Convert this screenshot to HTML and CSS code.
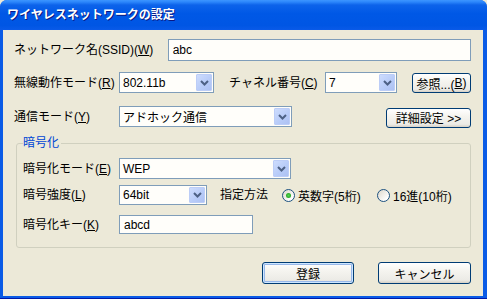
FILE: index.html
```html
<!DOCTYPE html>
<html lang="ja">
<head>
  <meta charset="UTF-8">
  <title>ワイヤレスネットワークの設定</title>
  <link rel="stylesheet" href="styles.css">
</head>
<body>

<div class="window">
  <div class="titlebar">ワイヤレスネットワークの設定</div>

  <div class="client">
    <div class="row row-ssid">
      <label class="lbl lbl-wide">ネットワーク名(SSID)(<u>W</u>)</label>
      <div class="textbox tb-ssid">abc</div>
    </div>

    <div class="row row-mode">
      <label class="lbl lbl-main">無線動作モード(<u>R</u>)</label>
      <div class="combo cb-mode"><span>802.11b</span><i class="drop"><svg viewBox="0 0 9 6" width="9" height="6"><path d="M1 1 L4.5 4.5 L8 1" fill="none" stroke="#4d6185" stroke-width="2"/></svg></i></div>
      <label class="lbl lbl-channel">チャネル番号(<u>C</u>)</label>
      <div class="combo cb-channel"><span>7</span><i class="drop"><svg viewBox="0 0 9 6" width="9" height="6"><path d="M1 1 L4.5 4.5 L8 1" fill="none" stroke="#4d6185" stroke-width="2"/></svg></i></div>
      <button class="btn btn-browse">参照...(<u>B</u>)</button>
    </div>

    <div class="row row-comm">
      <label class="lbl lbl-main">通信モード(<u>Y</u>)</label>
      <div class="combo cb-comm"><span>アドホック通信</span><i class="drop"><svg viewBox="0 0 9 6" width="9" height="6"><path d="M1 1 L4.5 4.5 L8 1" fill="none" stroke="#4d6185" stroke-width="2"/></svg></i></div>
      <button class="btn btn-detail">詳細設定 &gt;&gt;</button>
    </div>

    <fieldset class="group">
      <legend>暗号化</legend>

      <div class="row row-enc">
        <label class="lbl lbl-group">暗号化モード(<u>E</u>)</label>
        <div class="combo cb-enc"><span>WEP</span><i class="drop"><svg viewBox="0 0 9 6" width="9" height="6"><path d="M1 1 L4.5 4.5 L8 1" fill="none" stroke="#4d6185" stroke-width="2"/></svg></i></div>
      </div>

      <div class="row row-strength">
        <label class="lbl lbl-group">暗号強度(<u>L</u>)</label>
        <div class="combo cb-strength"><span>64bit</span><i class="drop"><svg viewBox="0 0 9 6" width="9" height="6"><path d="M1 1 L4.5 4.5 L8 1" fill="none" stroke="#4d6185" stroke-width="2"/></svg></i></div>
        <span class="lbl lbl-method">指定方法</span>
        <span class="radio radio-alpha"><i class="dot checked"></i>英数字(5桁)</span>
        <span class="radio"><i class="dot"></i>16進(10桁)</span>
      </div>

      <div class="row row-key">
        <label class="lbl lbl-group">暗号化キー(<u>K</u>)</label>
        <div class="textbox tb-key">abcd</div>
      </div>
    </fieldset>

    <div class="row row-actions">
      <button class="btn btn-ok">登録</button>
      <button class="btn btn-cancel">キャンセル</button>
    </div>
  </div>
</div>

</body>
</html>
```

FILE: styles.css
```css
* {
  margin: 0;
  padding: 0;
  box-sizing: border-box;
}

body {
  font-family: 'Liberation Sans', 'Noto Sans CJK JP', sans-serif;
  font-size: 12px;
  color: #000;
  background: #ece9d8;
}

.window {
  width: 487px;
  height: 299px;
  display: flex;
  flex-direction: column;
  background: #0a5be6;
  border-radius: 7px 7px 0 0;
  border-bottom: 1px solid #0019a8;
  overflow: hidden;
}

.titlebar {
  height: 30px;
  flex: none;
  padding: 7px 0 0 7px;
  color: #fff;
  font-weight: bold;
  font-size: 12px;
  line-height: 16px;
  text-shadow: 1px 1px #0a1883;
  background: linear-gradient(to bottom, #3d95ff 0, #2c86fb 2px, #0d63ea 5px, #0058e6 45%, #0056e4 85%, #0a5ae8 100%);
}

.client {
  flex: 1;
  margin: 0 4px 2px 3px;
  padding: 0 12px 0 11px;
  background: #ece9d8;
}

/* rows */
.row {
  display: flex;
  align-items: center;
}

.row-ssid { margin-top: 9px; height: 22px; }
.row-mode { margin-top: 11px; height: 21px; }
.row-comm { margin-top: 13px; height: 21px; }

.lbl {
  white-space: nowrap;
  line-height: 14px;
}

.lbl u {
  text-decoration: underline;
  text-underline-offset: 1px;
}

.lbl-wide { width: 154px; }
.lbl-main { width: 105px; }
.lbl-channel { width: 96px; margin-left: 15px; }
.lbl-group { width: 96px; }
.lbl-method { width: 62px; margin-left: 13px; }

/* text boxes */
.textbox {
  height: 100%;
  border: 1px solid #7f9db9;
  background: #fffefa;
  padding: 0 4px;
  display: flex;
  align-items: center;
}

.tb-ssid { width: 304px; }
.tb-key { width: 134px; }

/* combo boxes */
.combo {
  height: 100%;
  border: 1px solid #7f9db9;
  background: #fffefa;
  display: flex;
  align-items: center;
  justify-content: space-between;
  padding: 1px;
}

.combo span {
  padding-left: 2px;
}

.drop {
  width: 16px;
  height: 100%;
  display: flex;
  align-items: center;
  justify-content: center;
  border: 1px solid #bccdf7;
  border-radius: 1px;
  background: linear-gradient(135deg, #cddcfd 0%, #b7cbf8 60%, #adc1f2 100%);
}

.cb-mode { width: 95px; }
.cb-channel { width: 72px; }
.cb-comm { width: 173px; }
.cb-enc { width: 172px; }
.cb-strength { width: 88px; }

/* buttons */
.btn {
  font-family: inherit;
  font-size: 12px;
  height: 20px;
  border: 1px solid #003c74;
  border-radius: 3px;
  background: linear-gradient(to bottom, #fff 0%, #f5f4ef 40%, #ecebe6 85%, #d6d0c5 100%);
  color: #000;
  display: flex;
  align-items: center;
  justify-content: center;
}

.btn-browse { width: 59px; margin-left: 15px; margin-top: 1px; }
.btn-detail { width: 85px; margin-left: auto; margin-top: 2px; }

.btn-ok,
.btn-cancel {
  height: 22px;
}

.btn-ok {
  width: 92px;
  box-shadow: inset 0 0 0 1px #cee7ff, inset 0 0 0 2px #98b8ea;
}

.btn-cancel {
  width: 93px;
  margin-left: 24px;
}

/* group box */
.group {
  margin: 10px 0 0 2px;
  border: 1px solid #d0d0bf;
  border-radius: 3px;
  padding: 0 6px 13px 6px;
}

.group legend {
  color: #0046d5;
  line-height: 12px;
  padding: 0 2px 0 0;
}

.row-enc { margin-top: 9px; height: 21px; }
.row-strength { margin-top: 6px; height: 20px; }
.row-key { margin-top: 10px; height: 19px; }

/* radio buttons */
.radio {
  display: flex;
  align-items: center;
  gap: 3px;
  white-space: nowrap;
}

.radio-alpha { width: 95px; }

.dot {
  width: 13px;
  height: 13px;
  border: 1px solid #1c5180;
  border-radius: 50%;
  background: linear-gradient(135deg, #dcd7cb 0%, #fff 80%);
  display: flex;
  align-items: center;
  justify-content: center;
}

.dot.checked::after {
  content: '';
  width: 5px;
  height: 5px;
  border-radius: 50%;
  background: radial-gradient(circle, #55d451 0, #21a121 80%);
}

.row-actions {
  margin-top: 14px;
  height: 22px;
  justify-content: flex-end;
}
```
